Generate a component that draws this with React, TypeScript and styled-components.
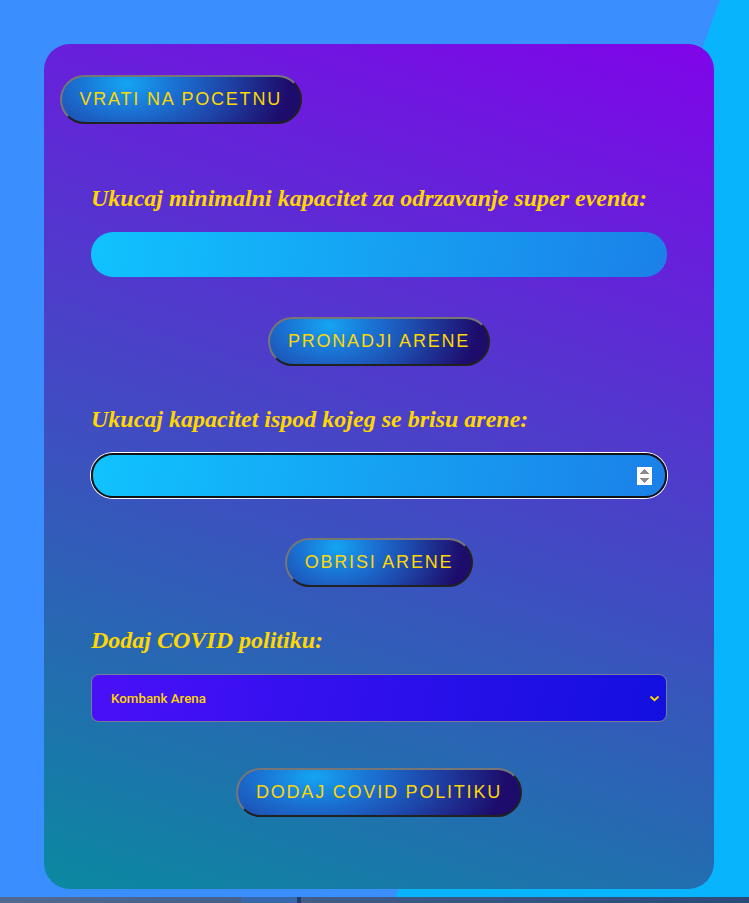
import React from "react";
import styled, { createGlobalStyle } from "styled-components";

const GlobalStyle = createGlobalStyle`
  html, body {
    margin: 0;
    padding: 0;
    background: #3a8efe;
  }
  body {
    font-family: "Liberation Sans", Arial, sans-serif;
  }
`;

const Page = styled.div`
  width: 749px;
  height: 897px;
  box-sizing: border-box;
  padding: 44px 0 8px 44px;
  background: linear-gradient(109.86deg, #3a8efe 677px, #08b4fb 677px);
`;

const Card = styled.div`
  width: 670px;
  height: 845px;
  box-sizing: border-box;
  padding: 31px 16px 72px;
  border-radius: 26px;
  background: linear-gradient(18deg, #0a89a0 0%, #8004ea 100%);
  display: flex;
  flex-direction: column;
`;

const GlowButton = styled.button<{ $align?: "start" | "center"; $top?: number }>`
  align-self: ${(p) => (p.$align === "start" ? "flex-start" : "center")};
  margin-top: ${(p) => p.$top ?? 0}px;
  height: 49px;
  box-sizing: border-box;
  padding: 0 17.5px;
  border: 2px outset #767676;
  border-radius: 25px;
  background: radial-gradient(
    ellipse 72% 220% at 27% 15%,
    #14a5f3 0%,
    #1a72d3 28%,
    #1e45a8 58%,
    #1d0c6b 95%
  );
  color: #ffd700;
  font-family: "Liberation Sans", Arial, sans-serif;
  font-size: 18px;
  letter-spacing: 0.1em;
  text-transform: uppercase;
  line-height: 21px;
  cursor: pointer;
`;

const Section = styled.div<{ $top: number }>`
  display: flex;
  flex-direction: column;
  padding: 0 31px;
  margin-top: ${(p) => p.$top}px;
`;

const Label = styled.h3`
  margin: 0 0 19px;
  font-family: "Liberation Serif", "Times New Roman", serif;
  font-style: italic;
  font-weight: bold;
  font-size: 24px;
  line-height: 30px;
  color: #ffd700;
`;

const TextField = styled.input<{ $focused?: boolean }>`
  height: 45px;
  box-sizing: border-box;
  width: 100%;
  padding: 0 13px;
  border: ${(p) => (p.$focused ? "2px solid #111" : "none")};
  box-shadow: ${(p) => (p.$focused ? "0 0 0 1px #ffffff" : "none")};
  border-radius: 22px;
  outline: none;
  background: linear-gradient(100deg, #10c3fe 0%, #1b80e8 100%);
  color: #ffd700;
  font-family: "Liberation Sans", Arial, sans-serif;
  font-size: 16px;

  &::-webkit-inner-spin-button {
    opacity: 1;
  }
`;

const SelectWrap = styled.div`
  position: relative;
  display: flex;
`;

const Select = styled.select`
  appearance: none;
  -webkit-appearance: none;
  height: 48px;
  box-sizing: border-box;
  width: 100%;
  padding: 0 28px 0 19px;
  border: 1px solid #7a7a9a;
  border-radius: 8px;
  background: linear-gradient(100deg, #4a10f8 0%, #1210df 100%);
  color: #ffd700;
  font-family: Roboto, "Liberation Sans", sans-serif;
  font-size: 13.33px;
  font-weight: 500;
  outline: none;
`;

const Chevron = styled.svg`
  position: absolute;
  right: 7px;
  top: 21px;
  width: 11px;
  height: 7px;
  pointer-events: none;
`;

const Strip = styled.div`
  height: 6px;
  display: flex;
  background: linear-gradient(to right, #506a93, #2b4a79);
`;

const StripGap = styled.div`
  width: 241px;
`;

const StripHighlight = styled.div`
  width: 56px;
  background: #3768ad;
`;

const StripDivider = styled.div`
  width: 4px;
  background: #1e3d6d;
`;

export default function App() {
  return (
    <>
      <GlobalStyle />
      <Page>
        <Card>
          <GlowButton $align="start">Vrati na pocetnu</GlowButton>

          <Section $top={59}>
            <Label>Ukucaj minimalni kapacitet za odrzavanje super eventa:</Label>
            <TextField type="text" />
            <GlowButton $top={40}>Pronadji arene</GlowButton>
          </Section>

          <Section $top={38}>
            <Label>Ukucaj kapacitet ispod kojeg se brisu arene:</Label>
            <TextField type="number" $focused />
            <GlowButton $top={40}>Obrisi arene</GlowButton>
          </Section>

          <Section $top={38}>
            <Label>Dodaj COVID politiku:</Label>
            <SelectWrap>
              <Select defaultValue="kombank">
                <option value="kombank">Kombank Arena</option>
              </Select>
              <Chevron viewBox="0 0 11 7" aria-hidden="true">
                <polyline
                  points="1.5,1.5 5.5,5.2 9.5,1.5"
                  fill="none"
                  stroke="#ffd700"
                  strokeWidth="2"
                />
              </Chevron>
            </SelectWrap>
            <GlowButton $top={46}>Dodaj covid politiku</GlowButton>
          </Section>
        </Card>
      </Page>
      <Strip>
        <StripGap />
        <StripHighlight />
        <StripDivider />
      </Strip>
    </>
  );
}
